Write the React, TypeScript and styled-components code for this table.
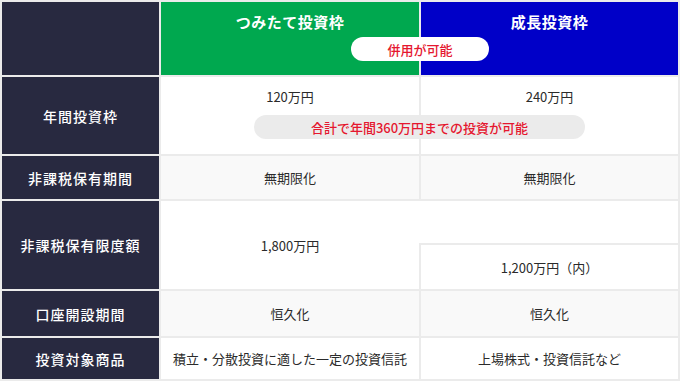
import React from 'react';
import styled, { createGlobalStyle } from 'styled-components';

const GlobalStyle = createGlobalStyle`
  html, body {
    margin: 0;
    padding: 0;
    background: #ffffff;
  }
  body {
    font-family: "Noto Sans CJK JP", "Noto Sans", sans-serif;
  }
`;

const Table = styled.div`
  position: relative;
  display: grid;
  grid-template-columns: 157px 258px 257px;
  grid-template-rows: 73px 77px 43px 88px 45px 41px;
  gap: 2px;
  padding: 2px;
  width: 680px;
  height: 381px;
  box-sizing: border-box;
  background: #ebebeb;
`;

const Corner = styled.div`
  background: #282940;
`;

const Head = styled.div<{ $bg: string }>`
  background: ${p => p.$bg};
  color: #ffffff;
  font-size: 15px;
  font-weight: 700;
  letter-spacing: 0.5px;
  line-height: 20px;
  text-align: center;
  padding-top: 10px;
  box-sizing: border-box;
`;

const Label = styled.div`
  display: flex;
  align-items: center;
  justify-content: center;
  background: #282940;
  color: #ffffff;
  font-size: 14px;
  font-weight: 500;
  letter-spacing: 1px;
`;

const Cell = styled.div<{ $shade?: boolean; $top?: boolean }>`
  display: flex;
  align-items: ${p => (p.$top ? 'flex-start' : 'center')};
  justify-content: center;
  padding-top: ${p => (p.$top ? '10px' : '0')};
  box-sizing: border-box;
  background: ${p => (p.$shade ? '#f9f9f9' : '#ffffff')};
  color: #2a2a2a;
  font-size: 13px;
  line-height: 20px;
`;

const SplitCell = styled.div`
  grid-column: 2 / 4;
  display: grid;
  grid-template-columns: 258px 259px;
  grid-template-rows: 42px 46px;
  background: #ffffff;
  color: #2a2a2a;
  font-size: 13px;
`;

const SplitMain = styled.div`
  grid-column: 1;
  grid-row: 1 / 3;
  display: flex;
  align-items: center;
  justify-content: center;
`;

const SplitSub = styled.div`
  grid-column: 2;
  grid-row: 2;
  display: flex;
  align-items: center;
  justify-content: center;
  border-left: 2px solid #ebebeb;
  border-top: 2px solid #ebebeb;
`;

const Pill = styled.div<{ $left: number; $top: number; $width: number; $bg: string }>`
  position: absolute;
  left: ${p => p.$left}px;
  top: ${p => p.$top}px;
  width: ${p => p.$width}px;
  height: 24px;
  border-radius: 12px;
  background: ${p => p.$bg};
  color: #e5172f;
  font-size: 13px;
  font-weight: 500;
  display: flex;
  align-items: center;
  justify-content: center;
`;

export default function App() {
  return (
    <>
      <GlobalStyle />
      <Table>
        <Corner />
        <Head $bg="#00a84f">つみたて投資枠</Head>
        <Head $bg="#0000c8">成長投資枠</Head>

        <Label>年間投資枠</Label>
        <Cell $top>120万円</Cell>
        <Cell $top>240万円</Cell>

        <Label>非課税保有期間</Label>
        <Cell $shade>無期限化</Cell>
        <Cell $shade>無期限化</Cell>

        <Label>非課税保有限度額</Label>
        <SplitCell>
          <SplitMain>1,800万円</SplitMain>
          <SplitSub>1,200万円（内）</SplitSub>
        </SplitCell>

        <Label>口座開設期間</Label>
        <Cell $shade>恒久化</Cell>
        <Cell $shade>恒久化</Cell>

        <Label>投資対象商品</Label>
        <Cell>積立・分散投資に適した一定の投資信託</Cell>
        <Cell>上場株式・投資信託など</Cell>

        <Pill $left={351} $top={37} $width={138} $bg="#ffffff">併用が可能</Pill>
        <Pill $left={254} $top={115} $width={331} $bg="#ebebeb">合計で年間360万円までの投資が可能</Pill>
      </Table>
    </>
  );
}
